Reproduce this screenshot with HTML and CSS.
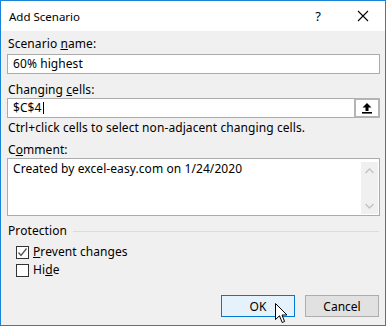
FILE: index.html
```html
<!DOCTYPE html>
<html lang="en">
<head>
    <meta charset="UTF-8">
    <title>Add Scenario</title>
    <link rel="stylesheet" href="styles.css">
</head>
<body>
    <div class="dialog">
        <div class="titlebar">
            <span class="title">Add Scenario</span>
            <span class="help">?</span>
            <svg class="close" width="12" height="12" viewBox="0 0 12 12">
                <path d="M1 1 L11 11 M11 1 L1 11" stroke="#000" stroke-width="1.1" fill="none"/>
            </svg>
        </div>

        <div class="content">
            <div class="label">Scenario <u>n</u>ame:</div>
            <div class="field">60% highest</div>

            <div class="label spaced">Changing <u>c</u>ells:</div>
            <div class="field ref">
                <span>$C$4</span><span class="caret"></span>
                <span class="collapse">
                    <svg width="12" height="12" viewBox="0 0 12 12">
                        <path d="M6 1 L10.5 5.5 L7.5 5.5 L7.5 9 L4.5 9 L4.5 5.5 L1.5 5.5 Z" fill="#000"/>
                        <rect x="1" y="10" width="10" height="1.6" fill="#000"/>
                    </svg>
                </span>
            </div>

            <div class="hint">Ctrl+click cells to select non-adjacent changing cells.</div>

            <div class="label comment-label">C<u>o</u>mment:</div>
            <div class="memo">
                <div class="memo-text">Created by excel-easy.com on 1/24/2020</div>
                <div class="scrollbar">
                    <svg width="9" height="6" viewBox="0 0 9 6"><path d="M0.5 5 L4.5 1 L8.5 5" stroke="#c2c2c2" stroke-width="1.3" fill="none"/></svg>
                    <svg width="9" height="6" viewBox="0 0 9 6"><path d="M0.5 1 L4.5 5 L8.5 1" stroke="#c2c2c2" stroke-width="1.3" fill="none"/></svg>
                </div>
            </div>

            <div class="group">
                <span>Protection</span>
                <span class="rule"></span>
            </div>

            <div class="check first">
                <span class="box">
                    <svg width="11" height="11" viewBox="0 0 11 11"><path d="M1.5 5.5 L4 8.5 L9.5 1.5" stroke="#555" stroke-width="1.3" fill="none"/></svg>
                </span>
                <span><u>P</u>revent changes</span>
            </div>
            <div class="check">
                <span class="box"></span>
                <span>Hi<u>d</u>e</span>
            </div>

            <div class="actions">
                <button class="btn default">OK</button>
                <button class="btn">Cancel</button>
            </div>
        </div>

        <svg class="cursor" width="13" height="21" viewBox="0 0 13 21">
            <path d="M0.5 0.5 L0.5 16.5 L4.5 12.8 L7.2 19.5 L9.6 18.5 L7 12 L12 12 Z" fill="#fff" stroke="#000" stroke-width="1" stroke-linejoin="round"/>
        </svg>
    </div>
</body>
</html>
```

FILE: styles.css
```css
body {
    margin: 0;
    font-family: 'Noto Sans', 'Liberation Sans', sans-serif;
    font-size: 12px;
    letter-spacing: 0.08px;
    color: #000;
}

.dialog {
    position: relative;
    width: 386px;
    height: 326px;
    box-sizing: border-box;
    border: 1px solid #1883d7;
    background: #f0f0f0;
    display: flex;
    flex-direction: column;
}

.titlebar {
    height: 30px;
    background: #fff;
    display: flex;
    align-items: center;
    padding-left: 8px;
}

.title {
    flex: 1;
    font-size: 11.5px;
    letter-spacing: 0;
}

.help {
    font-size: 13px;
    margin-right: 36px;
}

.close {
    margin-right: 16px;
}

.content {
    padding: 5px 5px 0 6px;
    display: flex;
    flex-direction: column;
}

.label {
    line-height: 16px;
    padding-left: 1px;
}

.label.spaced {
    margin-top: 8px;
}

.field {
    height: 20px;
    box-sizing: border-box;
    border: 1px solid #ababab;
    background: #fff;
    margin-top: 2px;
    padding-left: 5px;
    line-height: 18px;
    display: flex;
    align-items: center;
}

.field.ref {
    margin-top: 0;
    padding-right: 0;
}

.caret {
    width: 1px;
    height: 12px;
    background: #000;
    margin-left: 1px;
}

.collapse {
    margin-left: auto;
    width: 26px;
    height: 20px;
    margin-right: -1px;
    box-sizing: border-box;
    border: 2px solid #b4b4b4;
    background: #fff;
    display: flex;
    align-items: center;
    justify-content: center;
}

.hint {
    margin-top: 2px;
    line-height: 16px;
    padding-left: 1px;
}

.comment-label {
    margin-top: 6px;
}

.memo {
    height: 58px;
    box-sizing: border-box;
    border: 1px solid #ababab;
    background: #fff;
    display: flex;
    padding: 3px 1px 1px 5px;
}

.memo-text {
    flex: 1;
    line-height: 14px;
}

.scrollbar {
    width: 17px;
    background: #f0f0f0;
    display: flex;
    flex-direction: column;
    justify-content: space-between;
    align-items: center;
    padding: 6px 0 5px;
}

.group {
    margin-top: 7px;
    display: flex;
    align-items: center;
    line-height: 16px;
    padding-left: 1px;
}

.rule {
    flex: 1;
    height: 1px;
    background: #dcdcdc;
    margin-left: 6px;
    margin-right: 1px;
}

.check {
    display: flex;
    align-items: center;
    line-height: 16px;
    margin-top: 2px;
    padding-left: 9px;
}

.check.first {
    margin-top: 5px;
}

.box {
    width: 13px;
    height: 13px;
    box-sizing: border-box;
    border: 1px solid #333;
    background: #fff;
    margin-right: 4px;
    display: flex;
    align-items: center;
    justify-content: center;
}

.actions {
    margin-top: 17px;
    display: flex;
    justify-content: flex-end;
    gap: 10px;
    padding-right: 1px;
}

.btn {
    width: 74px;
    height: 22px;
    box-sizing: border-box;
    border: 1px solid #adadad;
    background: #e1e1e1;
    font-family: inherit;
    font-size: 12px;
    color: #000;
    padding: 0;
}

.btn.default {
    border-color: #0078d7;
    background: #e5f1fb;
}

.cursor {
    position: absolute;
    left: 274px;
    top: 302px;
}
```
